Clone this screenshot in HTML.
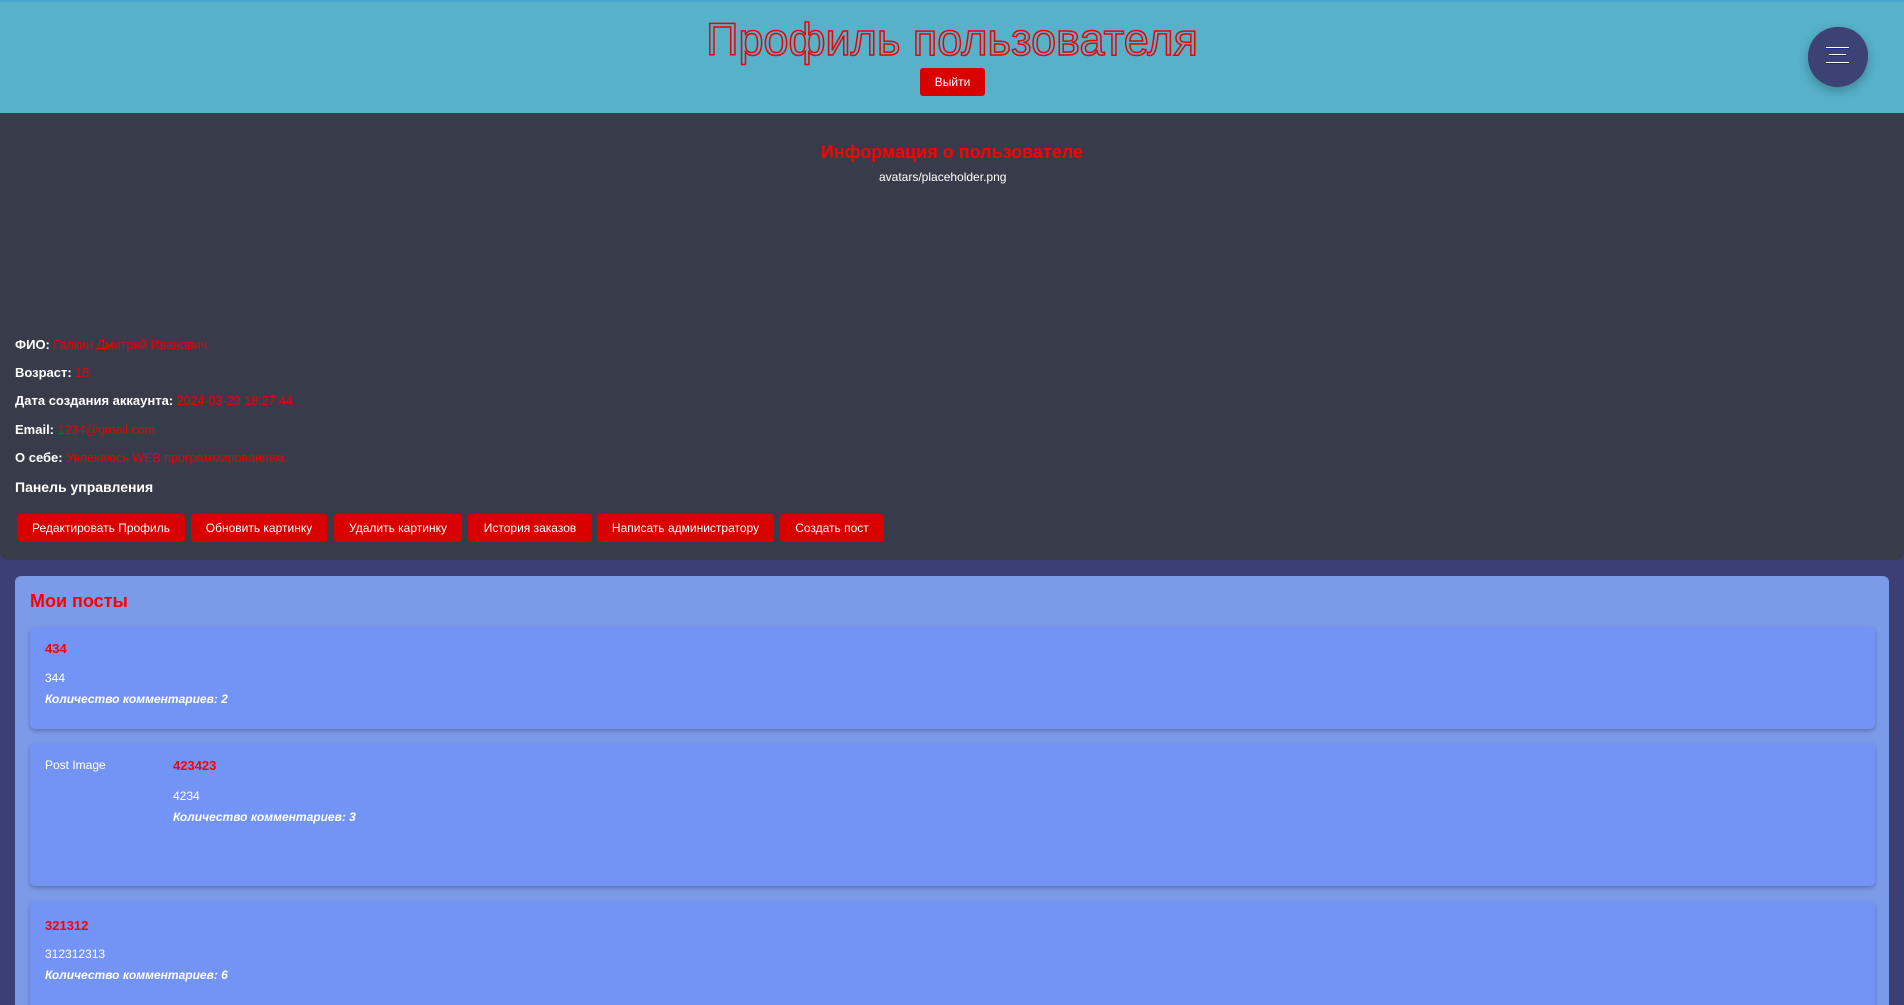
<!DOCTYPE html>
<html style="width:1904px;height:1005px;overflow:hidden"><head><meta charset="utf-8"><style>
*{box-sizing:border-box;margin:0;padding:0}
body{width:1904px;height:1005px;overflow:hidden;background:#3b3f73;font-family:"Liberation Sans",Arial,sans-serif;position:relative}
.hdr{position:absolute;left:0;top:0;width:1904px;height:113px;background:#56b1c9;border-top:2px solid #4aa8cc}
.hdr h1{position:absolute;left:0;width:1904px;top:13px;text-align:center;font-size:45px;font-weight:normal;color:#56b1c9;-webkit-text-stroke:1.5px #e00;line-height:50px}
.logout{position:absolute;left:920px;top:66px;width:65px;height:28px;background:#d90000;color:#fff;font-size:12px;line-height:28px;text-align:center;border-radius:3px}
.menu{position:absolute;left:1808px;top:25px;width:60px;height:60px;border-radius:50% 48% 52% 50%;background:#3c4273;box-shadow:0 4px 10px rgba(0,0,0,.25)}
.menu i{position:absolute;height:2px;background:#fff;border-top:1px solid #fff;border-bottom:1px solid #1b2a8a}
.dark{position:absolute;left:0;top:113px;width:1904px;height:447px;background:#383c4a;border-radius:0 0 8px 8px}
.dark h2{position:absolute;top:29px;width:1904px;text-align:center;font-size:18px;color:#f00;font-weight:bold}
.alt{position:absolute;left:879px;top:57px;color:#fff;font-size:12px}
.info{position:absolute;left:15px;font-size:13px;font-weight:bold;color:#fff}
.info span{color:#e00;font-weight:normal;font-size:12.5px}
.btn{position:absolute;top:401px;height:28px;background:#d90000;color:#fff;font-size:12px;line-height:28px;text-align:center;border-radius:3px}
.posts{position:absolute;left:15px;top:576px;width:1874px;height:429px;overflow:hidden;background:#7b9ae8;border-radius:6px 6px 0 0}
.posts h3{position:absolute;left:15px;top:15px;color:#f00;font-size:18px}
.card{position:absolute;left:15px;width:1845px;background:#7494f5;border-radius:5px;box-shadow:0 2px 4px rgba(0,0,0,.25)}
.t{position:absolute;color:#f00;font-weight:bold;font-size:13px}
.b{position:absolute;color:#fff;font-size:12px}
.c{position:absolute;color:#fff;font-size:12px;font-weight:bold;font-style:italic}
</style></head><body>
<div class="hdr"><h1>Профиль пользователя</h1><div class="logout">Выйти</div>
<div class="menu"><i style="left:18px;top:20px;width:23px"></i><i style="left:21px;top:27px;width:17px"></i><i style="left:18px;top:35px;width:23px"></i></div></div>
<div class="dark">
<h2>Информация о пользователе</h2>
<div class="alt">avatars/placeholder.png</div>
<div class="info" style="top:224px">ФИО: <span>Галкин Дмитрий Иванович</span></div>
<div class="info" style="top:252px">Возраст: <span>18</span></div>
<div class="info" style="top:280px">Дата создания аккаунта: <span>2024-03-29 18:27:44</span></div>
<div class="info" style="top:309px">Email: <span>1234@gmail.com</span></div>
<div class="info" style="top:337px">О себе: <span>Увлекаюсь WEB программированием.</span></div>
<div class="info" style="top:366px;font-size:14px">Панель управления</div>
<div class="btn" style="left:17px;width:168px">Редактировать Профиль</div>
<div class="btn" style="left:191px;width:136px">Обновить картинку</div>
<div class="btn" style="left:334px;width:128px">Удалить картинку</div>
<div class="btn" style="left:468px;width:124px">История заказов</div>
<div class="btn" style="left:597px;width:177px">Написать администратору</div>
<div class="btn" style="left:780px;width:104px">Создать пост</div>
</div>
<div class="posts"><h3>Мои посты</h3>
<div class="card" style="top:51px;height:102px"><div class="t" style="left:15px;top:14px">434</div><div class="b" style="left:15px;top:44px">344</div><div class="c" style="left:15px;top:65px">Количество комментариев: 2</div></div>
<div class="card" style="top:167px;height:143px"><div class="b" style="left:15px;top:15px">Post Image</div><div class="t" style="left:143px;top:15px">423423</div><div class="b" style="left:143px;top:46px">4234</div><div class="c" style="left:143px;top:67px">Количество комментариев: 3</div></div>
<div class="card" style="top:325px;height:110px"><div class="t" style="left:15px;top:17px">321312</div><div class="b" style="left:15px;top:46px">312312313</div><div class="c" style="left:15px;top:67px">Количество комментариев: 6</div></div>
</div>
</body></html>
